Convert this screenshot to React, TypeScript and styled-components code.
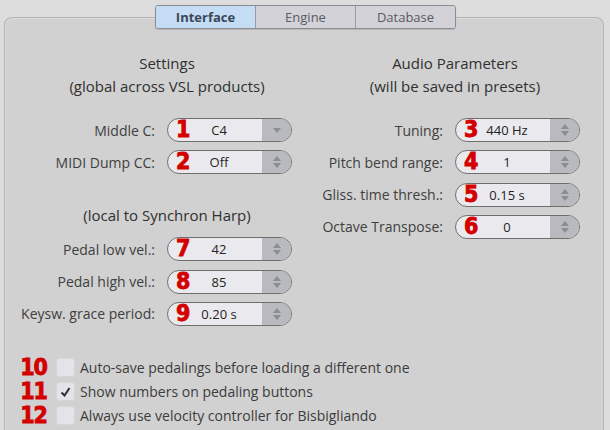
import React from 'react';
import styled, { createGlobalStyle } from 'styled-components';

const GlobalStyle = createGlobalStyle`
  html, body {
    margin: 0;
    padding: 0;
    background: #dddddd;
  }
  body {
    font-family: 'Open Sans', 'Noto Sans', sans-serif;
    overflow: hidden;
  }
`;

const Page = styled.div`
  width: 610px;
  height: 430px;
  display: flex;
  flex-direction: column;
  overflow: hidden;
`;

const TabBar = styled.div`
  display: flex;
  align-self: flex-start;
  margin: 5px 0 0 155px;
  border: 1px solid #8a8a90;
  border-radius: 3px;
  overflow: hidden;
  position: relative;
  z-index: 1;
  box-shadow: 0 1px 1px rgba(0, 0, 0, 0.12);
`;

const Tab = styled.div<{ $active?: boolean }>`
  width: 99px;
  height: 22px;
  display: flex;
  align-items: center;
  justify-content: center;
  font-size: 13px;
  font-weight: ${(p) => (p.$active ? 700 : 400)};
  color: ${(p) => (p.$active ? '#3a4758' : '#5a5a62')};
  background: ${(p) => (p.$active ? '#c4dcf4' : '#d2d2d8')};
  & + & {
    border-left: 1px solid #9a9aa2;
  }
`;

const Panel = styled.div`
  margin: -12px 6px 0 4px;
  flex: 1;
  background: #d1d1d1;
  border: 1px solid #b4b4b4;
  border-bottom: none;
  border-radius: 8px 8px 0 0;
  box-shadow: inset 1px 1px 0 #dcdcdc;
  padding-top: 34px;
`;

const Columns = styled.div`
  display: grid;
  grid-template-columns: 310px 290px;
`;

const Column = styled.div`
  display: flex;
  flex-direction: column;
`;

const Heading = styled.div<{ $center: number; $top?: number }>`
  width: ${(p) => p.$center * 2}px;
  text-align: center;
  font-size: 15px;
  line-height: 23px;
  color: #303030;
  margin-top: ${(p) => p.$top ?? 0}px;
  margin-bottom: ${(p) => (p.$top ? 10 : 20)}px;
`;

const Rows = styled.div`
  display: flex;
  flex-direction: column;
  gap: 8.3px;
`;

const Row = styled.div<{ $labelWidth: number }>`
  display: grid;
  grid-template-columns: ${(p) => p.$labelWidth}px 125px;
  column-gap: 12px;
  align-items: center;
`;

const Label = styled.div`
  text-align: right;
  font-size: 14px;
  color: #404040;
  white-space: nowrap;
`;

const Spin = styled.div`
  position: relative;
  height: 22px;
  border: 1px solid #6f6f6f;
  border-radius: 12px;
  display: flex;
  background: #eaeaee;
`;

const SpinValue = styled.div`
  flex: 1;
  display: flex;
  align-items: center;
  justify-content: center;
  padding-left: 8px;
  font-size: 13px;
  color: #232323;
`;

const SpinButton = styled.div`
  width: 29px;
  background: #b9b9c0;
  border-radius: 0 11px 11px 0;
  display: flex;
  flex-direction: column;
  align-items: center;
  justify-content: center;
  gap: 2px;
`;

const Marker = styled.span`
  position: absolute;
  left: 8px;
  top: 50%;
  transform: translateY(-52%);
  font-family: 'DejaVu Sans Condensed', 'DejaVu Sans', sans-serif;
  font-weight: 700;
  font-size: 23px;
  line-height: 1;
  color: #d40000;
  -webkit-text-stroke: 0.8px #d40000;
  letter-spacing: -1px;
`;

const Checks = styled.div`
  margin-top: 33px;
  display: flex;
  flex-direction: column;
  gap: 6px;
`;

const CheckRow = styled.div`
  display: flex;
  align-items: center;
  height: 18px;
`;

const CheckNumber = styled.span`
  width: 42px;
  text-align: right;
  font-family: 'DejaVu Sans Condensed', 'DejaVu Sans', sans-serif;
  font-weight: 700;
  font-size: 23px;
  line-height: 1;
  color: #d40000;
  -webkit-text-stroke: 0.8px #d40000;
  letter-spacing: -1px;
  margin-right: 9px;
`;

const Box = styled.div`
  width: 17px;
  height: 17px;
  border-radius: 3px;
  background: #e4e4e8;
  border: 1px solid #d6d6da;
  display: flex;
  align-items: center;
  justify-content: center;
  margin-right: 5px;
`;

const CheckText = styled.span`
  font-size: 14px;
  color: #3c3c3c;
`;

const Arrows = ({ combo }: { combo?: boolean }) =>
  combo ? (
    <svg width="8" height="5" viewBox="0 0 8 5">
      <path d="M0 0h8L4 5z" fill="#8c8c94" />
    </svg>
  ) : (
    <>
      <svg width="8" height="5" viewBox="0 0 8 5">
        <path d="M0 5h8L4 0z" fill="#8c8c94" />
      </svg>
      <svg width="8" height="5" viewBox="0 0 8 5">
        <path d="M0 0h8L4 5z" fill="#8c8c94" />
      </svg>
    </>
  );

type Field = { n: number; label: string; value: string; combo?: boolean };

const SpinField = ({ f, labelWidth }: { f: Field; labelWidth: number }) => (
  <Row $labelWidth={labelWidth}>
    <Label>{f.label}</Label>
    <Spin>
      <SpinValue>{f.value}</SpinValue>
      <SpinButton>
        <Arrows combo={f.combo} />
      </SpinButton>
      <Marker>{f.n}</Marker>
    </Spin>
  </Row>
);

const global: Field[] = [
  { n: 1, label: 'Middle C:', value: 'C4', combo: true },
  { n: 2, label: 'MIDI Dump CC:', value: 'Off' },
];

const local: Field[] = [
  { n: 7, label: 'Pedal low vel.:', value: '42' },
  { n: 8, label: 'Pedal high vel.:', value: '85' },
  { n: 9, label: 'Keysw. grace period:', value: '0.20 s' },
];

const audio: Field[] = [
  { n: 3, label: 'Tuning:', value: '440 Hz' },
  { n: 4, label: 'Pitch bend range:', value: '1' },
  { n: 5, label: 'Gliss. time thresh.:', value: '0.15 s' },
  { n: 6, label: 'Octave Transpose:', value: '0' },
];

const checks = [
  { n: 10, text: 'Auto-save pedalings before loading a different one', on: false },
  { n: 11, text: 'Show numbers on pedaling buttons', on: true },
  { n: 12, text: 'Always use velocity controller for Bisbigliando', on: false },
];

const App = () => {
  return (
    <Page>
      <GlobalStyle />
      <TabBar>
        <Tab $active>Interface</Tab>
        <Tab>Engine</Tab>
        <Tab>Database</Tab>
      </TabBar>
      <Panel>
        <Columns>
          <Column>
            <Heading $center={162}>
              Settings
              <br />
              (global across VSL products)
            </Heading>
            <Rows>
              {global.map((f) => (
                <SpinField key={f.n} f={f} labelWidth={150} />
              ))}
            </Rows>
            <Heading $center={162} $top={30}>
              (local to Synchron Harp)
            </Heading>
            <Rows>
              {local.map((f) => (
                <SpinField key={f.n} f={f} labelWidth={150} />
              ))}
            </Rows>
          </Column>
          <Column>
            <Heading $center={140}>
              Audio Parameters
              <br />
              (will be saved in presets)
            </Heading>
            <Rows>
              {audio.map((f) => (
                <SpinField key={f.n} f={f} labelWidth={128} />
              ))}
            </Rows>
          </Column>
        </Columns>
        <Checks>
          {checks.map((c) => (
            <CheckRow key={c.n}>
              <CheckNumber>{c.n}</CheckNumber>
              <Box>
                {c.on && (
                  <svg width="11" height="10" viewBox="0 0 11 10">
                    <path d="M1.5 5.5l3 3 5-7.5" stroke="#2e2e34" strokeWidth="2" fill="none" />
                  </svg>
                )}
              </Box>
              <CheckText>{c.text}</CheckText>
            </CheckRow>
          ))}
        </Checks>
      </Panel>
    </Page>
  );
};

export default App;
